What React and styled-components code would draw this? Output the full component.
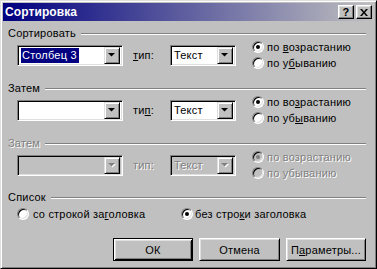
import React from "react";
import styled, { createGlobalStyle, css } from "styled-components";

const Global = createGlobalStyle`
  html, body { margin: 0; padding: 0; background: #c0c0c0; }
  body { font-family: "Liberation Sans", Arial, sans-serif; font-size: 11px; letter-spacing: 0.2px; color: #000; }
  * { box-sizing: border-box; }
`;

const Window = styled.div`
  width: 377px;
  height: 269px;
  background: #c0c0c0;
  border: 1px solid;
  border-color: #dfdfdf #000 #000 #dfdfdf;
  box-shadow: inset 1px 1px #fff, inset -1px -1px #808080;
  padding: 2px;
  display: flex;
  flex-direction: column;
  overflow: hidden;
`;

const TitleBar = styled.div`
  height: 18px;
  flex-shrink: 0;
  display: flex;
  align-items: center;
  padding: 0 2px 0 2px;
  background: linear-gradient(to right, #000080, #c0c0c0);
`;

const Title = styled.div`
  flex: 1;
  color: #fff;
  font-weight: bold;
  font-size: 12px;
  letter-spacing: 0.1px;
`;

const CapButton = styled.div`
  width: 16px;
  height: 14px;
  margin-left: ${(p) => (p.$gap ? "2px" : "0")};
  background: #c0c0c0;
  border: 1px solid;
  border-color: #fff #000 #000 #fff;
  box-shadow: inset -1px -1px #808080, inset 1px 1px #dfdfdf;
  display: flex;
  align-items: center;
  justify-content: center;
  font-weight: bold;
  font-size: 11px;
  line-height: 1;
  color: #000;
`;

const Body = styled.div`
  flex: 1;
  display: flex;
  flex-direction: column;
  padding: 6px 5px 0 5px;
`;

const Header = styled.div`
  height: 12px;
  flex-shrink: 0;
  display: flex;
  align-items: center;
  margin-top: ${(p) => p.$mt || 0}px;
  color: ${(p) => (p.$disabled ? "#808080" : "#000")};
  text-shadow: ${(p) => (p.$disabled ? "1px 1px #fff" : "none")};
`;

const Etched = styled.div`
  flex: 1;
  height: 2px;
  margin: 1px 3px 0 5px;
  border-top: 1px solid #808080;
  border-bottom: 1px solid #fff;
`;

const Row = styled.div`
  height: 32px;
  flex-shrink: 0;
  display: flex;
  align-items: center;
  padding-left: 9px;
`;

const Combo = styled.div`
  width: ${(p) => p.$w}px;
  height: 21px;
  border: 1px solid;
  border-color: #808080 #fff #fff #808080;
  box-shadow: inset 1px 1px #000, inset -1px -1px #dfdfdf;
  background: ${(p) => (p.$disabled ? "#c0c0c0" : "#fff")};
  display: flex;
  align-items: center;
  padding: 2px;
  flex-shrink: 0;
`;

const ComboText = styled.div`
  flex: 1;
  display: flex;
  align-items: center;
  height: 15px;
  padding-left: 1px;
  ${(p) =>
    p.$disabled &&
    css`
      color: #808080;
      text-shadow: 1px 1px #fff;
    `}
`;

const Selected = styled.span`
  background: #000080;
  color: #fff;
  padding: 1px 2px 1px 1px;
  line-height: 13px;
`;

const DropBtn = styled.div`
  width: 16px;
  height: 17px;
  background: #c0c0c0;
  border: 1px solid;
  border-color: #dfdfdf #000 #000 #dfdfdf;
  box-shadow: inset 1px 1px #fff, inset -1px -1px #808080;
  display: flex;
  align-items: center;
  justify-content: center;
`;

const TypeLabel = styled.div`
  width: 37px;
  margin-left: 10px;
  flex-shrink: 0;
  color: ${(p) => (p.$disabled ? "#808080" : "#000")};
  text-shadow: ${(p) => (p.$disabled ? "1px 1px #fff" : "none")};
`;

const RadioCol = styled.div`
  display: flex;
  flex-direction: column;
  margin-left: 16px;
`;

const RadioItem = styled.div`
  height: 16px;
  display: flex;
  align-items: center;
  gap: ${(p) => p.$gap || 3}px;
  white-space: nowrap;
  color: ${(p) => (p.$disabled ? "#808080" : "#000")};
  text-shadow: ${(p) => (p.$disabled ? "1px 1px #fff" : "none")};
`;

const RadioCircle = styled.span`
  position: relative;
  width: 12px;
  height: 12px;
  border-radius: 50%;
  border: 1px solid;
  border-color: #808080 #fff #fff #808080;
  box-shadow: inset 1px 1px #000, inset -1px -1px #dfdfdf;
  background: ${(p) => (p.$disabled ? "#c0c0c0" : "#fff")};
  flex-shrink: 0;
  text-shadow: none;
  ${(p) =>
    p.$checked &&
    css`
      &::after {
        content: "";
        position: absolute;
        left: 3px;
        top: 3px;
        width: 4px;
        height: 4px;
        border-radius: 50%;
        background: ${p.$disabled ? "#808080" : "#000"};
      }
    `}
`;

const Acc = styled.span`
  text-decoration: underline;
  text-underline-offset: 1px;
`;

const ListRow = styled.div`
  height: 16px;
  flex-shrink: 0;
  margin-top: 3px;
  display: flex;
  align-items: center;
  padding-left: 9px;
`;

const ListCell = styled.div`
  width: ${(p) => p.$w}px;
`;

const ButtonRow = styled.div`
  display: flex;
  justify-content: flex-end;
  gap: 6px;
  margin-top: 16px;
  padding-right: 3px;
`;

const Button = styled.div`
  width: ${(p) => p.$w || 80}px;
  height: 23px;
  background: #c0c0c0;
  display: flex;
  align-items: center;
  justify-content: center;
  border: 1px solid;
  ${(p) =>
    p.$default
      ? css`
          border-color: #000;
          box-shadow: inset 1px 1px #fff, inset -1px -1px #000, inset 2px 2px #dfdfdf, inset -2px -2px #808080;
        `
      : css`
          border-color: #fff #000 #000 #fff;
          box-shadow: inset 1px 1px #dfdfdf, inset -1px -1px #808080;
        `}
`;

const Arrow = ({ disabled }) => (
  <svg width="8" height="5" viewBox="0 0 8 5" style={{ display: "block" }}>
    {disabled && <path d="M1 1h7L4.5 4.5z" fill="#fff" />}
    <path d="M0 0h7L3.5 3.5z" fill={disabled ? "#808080" : "#000"} />
  </svg>
);

const CloseGlyph = () => (
  <svg width="8" height="7" viewBox="0 0 8 7" style={{ display: "block" }}>
    <path d="M0 0h2l2 2.5L6 0h2L5 3.5 8 7H6L4 4.5 2 7H0l3-3.5z" fill="#000" />
  </svg>
);

const SortSection = ({ label, mt, value, selected, disabled, acc }) => (
  <>
    <Header $mt={mt} $disabled={disabled}>
      {label}
      <Etched />
    </Header>
    <Row>
      <Combo $w={106} $disabled={disabled}>
        <ComboText $disabled={disabled}>{selected ? <Selected>{value}</Selected> : value}</ComboText>
        <DropBtn>
          <Arrow disabled={disabled} />
        </DropBtn>
      </Combo>
      <TypeLabel $disabled={disabled}>{acc.type}</TypeLabel>
      <Combo $w={66} $disabled={disabled}>
        <ComboText $disabled={disabled}>Текст</ComboText>
        <DropBtn>
          <Arrow disabled={disabled} />
        </DropBtn>
      </Combo>
      <RadioCol>
        <RadioItem $disabled={disabled}>
          <RadioCircle $checked $disabled={disabled} />
          <span>{acc.asc}</span>
        </RadioItem>
        <RadioItem $disabled={disabled}>
          <RadioCircle $disabled={disabled} />
          <span>{acc.desc}</span>
        </RadioItem>
      </RadioCol>
    </Row>
  </>
);

export default function App() {
  return (
    <>
      <Global />
      <Window>
        <TitleBar>
          <Title>Сортировка</Title>
          <CapButton>?</CapButton>
          <CapButton $gap>
            <CloseGlyph />
          </CapButton>
        </TitleBar>
        <Body>
          <SortSection
            label="Сортировать"
            mt={0}
            value="Столбец 3"
            selected
            acc={{
              type: (
                <>
                  <Acc>т</Acc>ип:
                </>
              ),
              asc: (
                <>
                  по <Acc>в</Acc>озрастанию
                </>
              ),
              desc: (
                <>
                  по у<Acc>б</Acc>ыванию
                </>
              ),
            }}
          />
          <SortSection
            label="Затем"
            mt={11}
            value=""
            acc={{
              type: (
                <>
                  ти<Acc>п</Acc>:
                </>
              ),
              asc: (
                <>
                  по во<Acc>з</Acc>растанию
                </>
              ),
              desc: (
                <>
                  по уб<Acc>ы</Acc>ванию
                </>
              ),
            }}
          />
          <SortSection
            label="Затем"
            mt={11}
            value=""
            disabled
            acc={{ type: "тип:", asc: "по возрастанию", desc: "по убыванию" }}
          />
          <Header $mt={10}>
            Список
            <Etched />
          </Header>
          <ListRow>
            <ListCell $w={164}>
              <RadioItem $gap={4}>
                <RadioCircle />
                <span>
                  со строкой за<Acc>г</Acc>оловка
                </span>
              </RadioItem>
            </ListCell>
            <ListCell $w={180}>
              <RadioItem $gap={2}>
                <RadioCircle $checked />
                <span>
                  без стро<Acc>к</Acc>и заголовка
                </span>
              </RadioItem>
            </ListCell>
          </ListRow>
          <ButtonRow>
            <Button $default $w={80}>
              ОК
            </Button>
            <Button $w={81}>Отмена</Button>
            <Button $w={80}>
              П<Acc>а</Acc>раметры...
            </Button>
          </ButtonRow>
        </Body>
      </Window>
    </>
  );
}
